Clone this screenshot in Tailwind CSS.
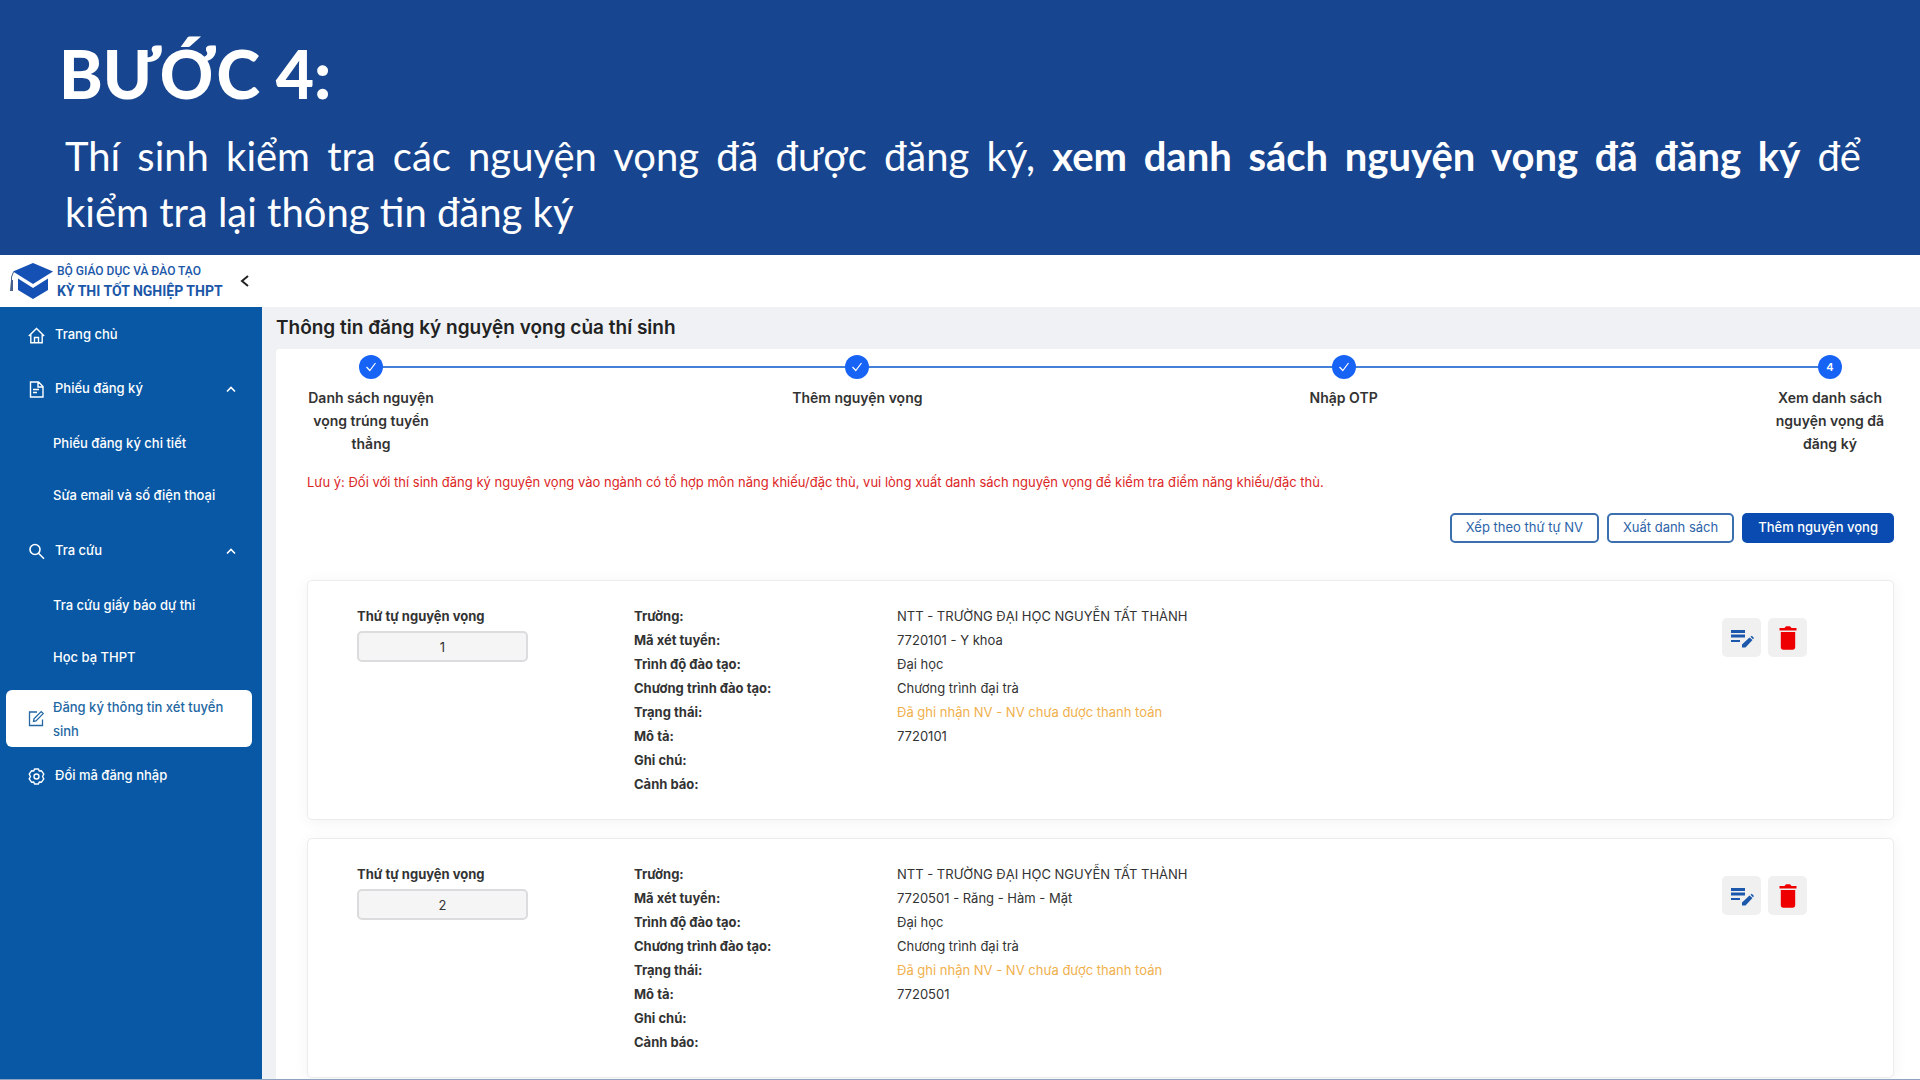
<!DOCTYPE html>
<html lang="vi">
<head>
    <meta charset="UTF-8">
    <meta name="viewport" content="width=device-width, initial-scale=1.0">
    <title>Thông tin đăng ký nguyện vọng</title>
    <script src="https://cdn.jsdelivr.net/npm/@tailwindcss/browser@4"></script>
</head>
<body class="min-h-screen flex flex-col bg-white font-['Inter',sans-serif] text-[#333]">
    <!-- Banner -->
    <section class="bg-[#17458f] text-white h-[255px] px-[59px] pt-8 shrink-0 font-['Lato',sans-serif]">
        <h1 class="text-[66px] leading-[84px] font-black">BƯỚC 4:</h1>
        <p class="mt-3 ml-[6px] text-[40px] leading-[56px] text-justify">Thí sinh kiểm tra các nguyện vọng đã được đăng ký, <b class="font-bold">xem danh sách nguyện vọng đã đăng ký</b> để kiểm&nbsp;tra lại thông tin đăng ký</p>
    </section>

    <!-- Top bar -->
    <header class="h-[52px] shrink-0 flex items-center bg-white">
        <a href="#" class="flex items-center gap-1 pl-[10px] text-[#1b57a8] font-['Roboto',sans-serif]">
            <svg class="w-[43px] h-9" viewBox="0 0 43 36">
                <path d="M23 0 43 8.500 23 21 3 8.500Z" fill="#1550b5"/>
                <path d="M8 15.500 23 25 38 15.500V27L23 36 8 27Z" fill="#1550b5"/>
                <path d="M7 13 23 23 39 13" fill="none" stroke="#fff" stroke-width="1.500"/>
                <path d="M3.500 9 1.500 14V27" fill="none" stroke="#47618a" stroke-width="1"/>
                <path d="M1 17h2v11H0z" fill="#47618a"/>
            </svg>
            <span class="flex flex-col">
                <span class="text-[12px] leading-5 font-medium">BỘ GIÁO DỤC VÀ ĐÀO TẠO</span>
                <span class="text-[14px] leading-5 font-bold">KỲ THI TỐT NGHIỆP THPT</span>
            </span>
        </a>
        <button type="button" aria-label="Thu gọn" class="ml-3 p-1">
            <svg class="w-3 h-3" viewBox="0 0 12 12" fill="none" stroke="#222" stroke-width="2"><path d="M9 1 3 6l6 5"/></svg>
        </button>
    </header>

    <div class="flex flex-1">
        <!-- Sidebar -->
        <nav class="w-[262px] shrink-0 pt-px bg-[#0858a5] text-white text-[13px] font-medium">
            <a href="#" class="flex items-center h-[54px] pl-7 gap-[10px]">
                <svg class="w-[17px] h-[17px]" viewBox="0 0 17 17" fill="none" stroke="currentColor" stroke-width="1.400"><path d="M.8 9 8.500 1.500 16.200 9M2.800 7.500V15.800H14.200V7.500M6.500 15.500V10.500H10.500V15.500"/></svg>
                Trang chủ
            </a>
            <a href="#" class="flex items-center h-[54px] pl-7 pr-[26px] gap-[10px]">
                <svg class="w-[17px] h-[17px]" viewBox="0 0 17 17" fill="none" stroke="currentColor" stroke-width="1.400"><path d="M2.500 1H10.500L15 5.500V16H2.500ZM10 1V6H15M5 8.500H11M5 11.500H9"/></svg>
                Phiếu đăng ký
                <svg class="w-[10px] h-[10px] ml-auto" viewBox="0 0 10 10" fill="none" stroke="currentColor" stroke-width="1.600"><path d="M1 7.500 5 3.500 9 7.500"/></svg>
            </a>
            <div class="py-[2px]">
                <a href="#" class="flex items-center h-[52px] pl-[53px]">Phiếu đăng ký chi tiết</a>
                <a href="#" class="flex items-center h-[52px] pl-[53px]">Sửa email và số điện thoại</a>
            </div>
            <a href="#" class="flex items-center h-[54px] pl-7 pr-[26px] gap-[10px]">
                <svg class="w-[17px] h-[17px]" viewBox="0 0 17 17" fill="none" stroke="currentColor" stroke-width="1.600"><circle cx="7" cy="6.500" r="5"/><path d="M10.500 10.200 16 15.800"/></svg>
                Tra cứu
                <svg class="w-[10px] h-[10px] ml-auto" viewBox="0 0 10 10" fill="none" stroke="currentColor" stroke-width="1.600"><path d="M1 7.500 5 3.500 9 7.500"/></svg>
            </a>
            <div class="py-[2px]">
                <a href="#" class="flex items-center h-[52px] pl-[53px]">Tra cứu giấy báo dự thi</a>
                <a href="#" class="flex items-center h-[52px] pl-[53px]">Học bạ THPT</a>
            </div>
            <a href="#" class="flex items-center h-[57px] ml-[6px] mr-[10px] mt-1 mb-[2px] pl-[22px] pr-4 gap-2 rounded-md bg-white text-[#2367a3] leading-6">
                <svg class="w-[17px] h-[17px] shrink-0" viewBox="0 0 17 17" fill="none" stroke="currentColor" stroke-width="1.300"><path d="M9 2H1.500V15.500H14.500V9.500M5.500 11.500 6 8.800 13.200 1.600 15.200 3.600 8 10.900Z"/></svg>
                Đăng ký thông tin xét tuyển sinh
            </a>
            <a href="#" class="flex items-center h-[54px] pl-7 gap-[10px]">
                <svg class="w-[17px] h-[17px]" viewBox="0 0 17 17" fill="none" stroke="currentColor" stroke-width="1.400" stroke-linejoin="round"><path d="M6.500 1H10.500L11.200 3 13.500 2.800 15.800 6.200 14.500 8.500 15.800 10.800 13.500 14.200 11.200 14 10.500 16H6.500L5.800 14 3.500 14.200 1.200 10.800 2.500 8.500 1.200 6.200 3.500 2.800 5.800 3Z"/><circle cx="8.500" cy="8.500" r="2.500"/></svg>
                Đổi mã đăng nhập
            </a>
        </nav>

        <!-- Main content -->
        <main class="flex-1 flex flex-col bg-[#eff1f4] pl-[14px]">
            <h2 class="h-[42px] leading-[42px] text-[19px] font-semibold text-[#222]">Thông tin đăng ký nguyện vọng của thí sinh</h2>
            <div class="flex-1 bg-white rounded-tl pl-[31px] pr-[26px] pt-[6px]">
                <!-- Steps -->
                <ol class="relative flex justify-between -mx-[6px] text-[14px] leading-[23px] font-semibold text-center">
                    <li class="absolute left-[70px] right-[70px] top-[11px] h-[2px] bg-[#4580d8]" aria-hidden="true"></li>
                    <li class="relative w-[140px] flex flex-col items-center gap-[7px]">
                        <span class="w-6 h-6 rounded-full bg-[#1763f5] flex items-center justify-center"><svg class="w-3 h-3" viewBox="0 0 12 12" fill="none" stroke="#fff" stroke-width="1.200"><path d="M1.500 6 4.800 9.500 10.500 2"/></svg></span>
                        Danh sách nguyện vọng trúng tuyển thẳng
                    </li>
                    <li class="relative w-[140px] flex flex-col items-center gap-[7px]">
                        <span class="w-6 h-6 rounded-full bg-[#1763f5] flex items-center justify-center"><svg class="w-3 h-3" viewBox="0 0 12 12" fill="none" stroke="#fff" stroke-width="1.200"><path d="M1.500 6 4.800 9.500 10.500 2"/></svg></span>
                        Thêm nguyện vọng
                    </li>
                    <li class="relative w-[140px] flex flex-col items-center gap-[7px]">
                        <span class="w-6 h-6 rounded-full bg-[#1763f5] flex items-center justify-center"><svg class="w-3 h-3" viewBox="0 0 12 12" fill="none" stroke="#fff" stroke-width="1.200"><path d="M1.500 6 4.800 9.500 10.500 2"/></svg></span>
                        Nhập OTP
                    </li>
                    <li class="relative w-[140px] flex flex-col items-center gap-[7px]">
                        <span class="w-6 h-6 rounded-full bg-[#1763f5] text-white text-[11px] flex items-center justify-center">4</span>
                        Xem danh sách nguyện vọng đã đăng ký
                    </li>
                </ol>

                <p class="mt-[15px] text-[13px] leading-6 text-[#dc2626]">Lưu ý: Đối với thí sinh đăng ký nguyện vọng vào ngành có tổ hợp môn năng khiếu/đặc thù, vui lòng xuất danh sách nguyện vọng để kiểm tra điểm năng khiếu/đặc thù.</p>

                <div class="mt-[19px] flex justify-end gap-2 text-[13px]">
                    <button type="button" class="h-[30px] px-[14px] rounded-[5px] border-2 border-[#3b6fae] text-[#2c63a8]">Xếp theo thứ tự NV</button>
                    <button type="button" class="h-[30px] px-[14px] rounded-[5px] border-2 border-[#3b6fae] text-[#2c63a8]">Xuất danh sách</button>
                    <button type="button" class="h-[30px] px-4 rounded-[5px] bg-[#094bb0] text-white font-medium">Thêm nguyện vọng</button>
                </div>

                <!-- Wish list -->
                <div class="mt-[37px] space-y-[18px] text-[13px] leading-6">
                    <article class="flex rounded-[5px] border border-[#ececee] bg-white shadow-[0_2px_16px_rgba(0,0,0,0.05)] pl-[49px] pr-[86px] py-[23px]">
                        <div class="w-[277px]">
                            <label for="order1" class="block font-bold">Thứ tự nguyện vọng</label>
                            <input id="order1" type="text" value="1" readonly class="mt-[3px] w-[171px] h-[31px] rounded-[5px] border-2 border-[#dcdcde] bg-[#f5f5f5] text-center">
                        </div>
                        <dl class="flex-1 grid grid-cols-[263px_1fr] auto-rows-[24px]">
                            <dt class="font-bold">Trường:</dt><dd>NTT - TRƯỜNG ĐẠI HỌC NGUYỄN TẤT THÀNH</dd>
                            <dt class="font-bold">Mã xét tuyển:</dt><dd>7720101 - Y khoa</dd>
                            <dt class="font-bold">Trình độ đào tạo:</dt><dd>Đại học</dd>
                            <dt class="font-bold">Chương trình đào tạo:</dt><dd>Chương trình đại trà</dd>
                            <dt class="font-bold">Trạng thái:</dt><dd class="text-[#f0b04c]">Đã ghi nhận NV - NV chưa được thanh toán</dd>
                            <dt class="font-bold">Mô tả:</dt><dd>7720101</dd>
                            <dt class="font-bold">Ghi chú:</dt><dd></dd>
                            <dt class="font-bold">Cảnh báo:</dt><dd></dd>
                        </dl>
                        <div class="flex items-start gap-[7px] pt-[14px]">
                            <button type="button" aria-label="Sửa" class="w-[39px] h-[39px] rounded-[5px] bg-[#f0f0f0] flex items-center justify-center">
                                <svg class="w-6 h-6" viewBox="0 0 24 24"><path d="M1 4H15V7H1ZM1 8.500H15V11.500H1ZM1 14H10V16H1Z" fill="#1b58ab"/><path d="M12 18.500 19.500 11.500 22.500 14 15.500 21.500H12ZM20.500 10.800 21.800 9.800 24 12 23 13.200Z" fill="#1b58ab"/></svg>
                            </button>
                            <button type="button" aria-label="Xóa" class="w-[39px] h-[39px] rounded-[5px] bg-[#f0f0f0] flex items-center justify-center">
                                <svg class="w-6 h-6" viewBox="0 0 24 24" fill="#ee0000"><path d="M3.500 2H8.500L10 .3H14L15.500 2H20.500V4.500H3.500ZM4.800 6H19.200V21Q19.200 23.800 16.500 23.800H7.500Q4.800 23.800 4.800 21Z"/></svg>
                            </button>
                        </div>
                    </article>

                    <article class="flex rounded-[5px] border border-[#ececee] bg-white shadow-[0_2px_16px_rgba(0,0,0,0.05)] pl-[49px] pr-[86px] py-[23px]">
                        <div class="w-[277px]">
                            <label for="order2" class="block font-bold">Thứ tự nguyện vọng</label>
                            <input id="order2" type="text" value="2" readonly class="mt-[3px] w-[171px] h-[31px] rounded-[5px] border-2 border-[#dcdcde] bg-[#f5f5f5] text-center">
                        </div>
                        <dl class="flex-1 grid grid-cols-[263px_1fr] auto-rows-[24px]">
                            <dt class="font-bold">Trường:</dt><dd>NTT - TRƯỜNG ĐẠI HỌC NGUYỄN TẤT THÀNH</dd>
                            <dt class="font-bold">Mã xét tuyển:</dt><dd>7720501 - Răng - Hàm - Mặt</dd>
                            <dt class="font-bold">Trình độ đào tạo:</dt><dd>Đại học</dd>
                            <dt class="font-bold">Chương trình đào tạo:</dt><dd>Chương trình đại trà</dd>
                            <dt class="font-bold">Trạng thái:</dt><dd class="text-[#f0b04c]">Đã ghi nhận NV - NV chưa được thanh toán</dd>
                            <dt class="font-bold">Mô tả:</dt><dd>7720501</dd>
                            <dt class="font-bold">Ghi chú:</dt><dd></dd>
                            <dt class="font-bold">Cảnh báo:</dt><dd></dd>
                        </dl>
                        <div class="flex items-start gap-[7px] pt-[14px]">
                            <button type="button" aria-label="Sửa" class="w-[39px] h-[39px] rounded-[5px] bg-[#f0f0f0] flex items-center justify-center">
                                <svg class="w-6 h-6" viewBox="0 0 24 24"><path d="M1 4H15V7H1ZM1 8.500H15V11.500H1ZM1 14H10V16H1Z" fill="#1b58ab"/><path d="M12 18.500 19.500 11.500 22.500 14 15.500 21.500H12ZM20.500 10.800 21.800 9.800 24 12 23 13.200Z" fill="#1b58ab"/></svg>
                            </button>
                            <button type="button" aria-label="Xóa" class="w-[39px] h-[39px] rounded-[5px] bg-[#f0f0f0] flex items-center justify-center">
                                <svg class="w-6 h-6" viewBox="0 0 24 24" fill="#ee0000"><path d="M3.500 2H8.500L10 .3H14L15.500 2H20.500V4.500H3.500ZM4.800 6H19.200V21Q19.200 23.800 16.500 23.800H7.500Q4.800 23.800 4.800 21Z"/></svg>
                            </button>
                        </div>
                    </article>
                </div>
            </div>
        </main>
    </div>
    <div class="h-px shrink-0 bg-[#8fa3c0]"></div>
</body>
</html>
